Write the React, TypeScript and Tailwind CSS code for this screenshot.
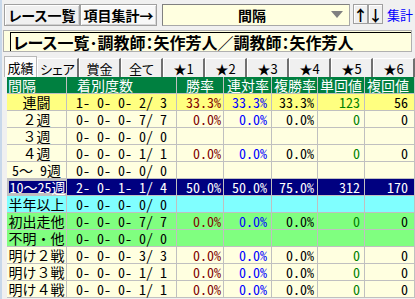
import React from "react";

const ui = "font-['Noto_Sans_CJK_JP',sans-serif] [font-feature-settings:'palt']";
const mono = "font-['Noto_Sans_Mono_CJK_JP','Noto_Sans_CJK_JP',monospace]";

type Row = {
  label: string;
  rec: string;
  w?: string;
  r?: string;
  p?: string;
  t?: string;
  f?: string;
  kind: "normal" | "yellow" | "navy" | "cyan" | "green";
};

const rows: Row[] = [
  { label: "連闘", rec: "1- 0- 0- 2/ 3", w: "33.3%", r: "33.3%", p: "33.3%", t: "123", f: "56", kind: "yellow" },
  { label: "２週", rec: "0- 0- 0- 7/ 7", w: "0.0%", r: "0.0%", p: "0.0%", t: "0", f: "0", kind: "normal" },
  { label: "３週", rec: "0- 0- 0- 0/ 0", kind: "normal" },
  { label: "４週", rec: "0- 0- 0- 1/ 1", w: "0.0%", r: "0.0%", p: "0.0%", t: "0", f: "0", kind: "normal" },
  { label: "5～ 9週", rec: "0- 0- 0- 0/ 0", kind: "normal" },
  { label: "10～25週", rec: "2- 0- 1- 1/ 4", w: "50.0%", r: "50.0%", p: "75.0%", t: "312", f: "170", kind: "navy" },
  { label: "半年以上", rec: "0- 0- 0- 0/ 0", kind: "cyan" },
  { label: "初出走他", rec: "0- 0- 0- 7/ 7", w: "0.0%", r: "0.0%", p: "0.0%", t: "0", f: "0", kind: "green" },
  { label: "不明・他", rec: "0- 0- 0- 0/ 0", kind: "green" },
  { label: "明け２戦", rec: "0- 0- 0- 3/ 3", w: "0.0%", r: "0.0%", p: "0.0%", t: "0", f: "0", kind: "normal" },
  { label: "明け３戦", rec: "0- 0- 0- 1/ 1", w: "0.0%", r: "0.0%", p: "0.0%", t: "0", f: "0", kind: "normal" },
  { label: "明け４戦", rec: "0- 0- 0- 1/ 1", w: "0.0%", r: "0.0%", p: "0.0%", t: "0", f: "0", kind: "normal" },
];

const bgFor: Record<Row["kind"], string> = {
  normal: "bg-[#ffffe0]",
  yellow: "bg-[#ffff80]",
  navy: "bg-[#000080]",
  cyan: "bg-[#80ffff]",
  green: "bg-[#80ff80]",
};

const tabs = ["シェア", "賞金", "全て", "★1", "★2", "★3", "★4", "★5", "★6"];

function DataRow({ row }: { row: Row }) {
  const navy = row.kind === "navy";
  const cell = "h-full border-r border-[#c0c0c0] flex items-center";
  return (
    <div className={`flex h-[17px] border-b border-[#c0c0c0] ${bgFor[row.kind]} ${navy ? "text-white" : "text-black"}`}>
      <div className={`${cell} w-[60px] justify-center ${navy ? "border-2 border-[#a00000]" : ""}`}>
        <span className="whitespace-pre">{row.label}</span>
      </div>
      <div className={`${cell} w-[110px] justify-center whitespace-pre`}>{row.rec}</div>
      <div className={`${cell} w-[47px] justify-end pr-[2px] ${navy ? "" : "text-[#800000]"}`}>{row.w}</div>
      <div className={`${cell} w-[48px] justify-end pr-[4px] ${navy ? "" : "text-[#0000ff]"}`}>{row.r}</div>
      <div className={`${cell} w-[46px] justify-end pr-[3px]`}>{row.p}</div>
      <div className={`${cell} w-[47px] justify-end pr-[4px] ${navy ? "" : "text-[#008000]"}`}>{row.t}</div>
      <div className={`${cell} w-[50px] justify-end pr-[6px]`}>{row.f}</div>
    </div>
  );
}

export default function App() {
  return (
    <div className="w-[415px] h-[299px] overflow-hidden bg-[#f0f0f0] border-l-2 border-[#c8d8ea] flex flex-col">
      {/* top bar */}
      <div className={`flex items-start pt-[4px] pl-[2px] ${ui}`}>
        <div className="w-[76px] h-[22px] border border-[#a0a0a0] bg-[#f0f0f0] shadow-[inset_1px_1px_0_#fff,inset_-1px_-1px_0_#d0d0d0] flex items-center justify-center font-bold text-[14px] leading-none text-black">
          レース一覧
        </div>
        <div className="w-[77px] h-[22px] border border-[#a0a0a0] bg-[#f8f8f8] shadow-[inset_1px_1px_0_#fff,inset_-1px_-1px_0_#d8d8d8] flex items-center justify-center font-bold text-[14px] leading-none text-black">
          項目集計→
        </div>
        <div className="ml-[5px] w-[188px] h-[22px] border border-[#a8a8a8] border-t-[#808080] border-l-[#808080] bg-[#ffffe0] flex items-center">
          <span className="flex-1 text-center font-bold text-[14px] leading-none text-black pl-[10px]">間隔</span>
          <svg width="12" height="8" viewBox="0 0 12 8" className="mr-[6px]">
            <polygon points="0,0 12,0 6,7" fill="#808080" />
          </svg>
        </div>
        <div className="ml-[3px] w-[15px] h-[20px] border border-[#a0a0a0] bg-[#f0f0f0] shadow-[inset_1px_1px_0_#fff] flex items-center justify-center font-bold text-[15px] leading-none text-black">
          ↑
        </div>
        <div className="w-[15px] h-[20px] border border-[#a0a0a0] bg-[#f0f0f0] shadow-[inset_1px_1px_0_#fff] flex items-center justify-center font-bold text-[15px] leading-none text-black">
          ↓
        </div>
        <div className="ml-[4px] h-[20px] flex items-center whitespace-nowrap text-[13px] leading-none text-[#0000ff]">集計</div>
      </div>

      {/* title box */}
      <div className={`mt-[4px] ml-[1px] w-[409px] h-[22px] border border-[#b0b0b0] bg-[#ffffe0] pl-[6px] pt-[1px] ${ui}`}>
        <div className="h-full border-l border-t border-[#000] flex items-center pl-[2px] font-bold text-[16px] leading-none text-black whitespace-nowrap">
          レース一覧･調教師：矢作芳人／調教師：矢作芳人
        </div>
      </div>

      {/* tabs */}
      <div className={`mt-[4px] ml-[2px] flex items-end h-[21px] ${ui}`}>
        <div className="w-[43px] h-[21px] bg-[#fcfcfc] border border-b-0 border-[#b8b8b8] flex items-center justify-center text-[13px] leading-none text-black">
          成績
        </div>
        {tabs.map((t) => (
          <div
            key={t}
            className="w-[42px] h-[19px] shrink-0 bg-[#f0f0f0] border-t border-l border-white border-r-2 border-r-[#707070] flex items-center justify-center text-[13px] leading-none text-black"
          >
            {t}
          </div>
        ))}
      </div>

      {/* table */}
      <div className={`ml-[5px] flex flex-col w-[420px] text-[14px] leading-[16px] ${mono}`}>
        <div className={`flex h-[17px] bg-[#008040] text-white border-b border-[#c0c0c0] ${ui}`}>
          <div className="w-[60px] h-full border-r border-[#c0c0c0] pl-[1px] flex items-center">間隔</div>
          <div className="w-[110px] h-full border-r border-[#c0c0c0] pl-[10px] flex items-center">着別度数</div>
          <div className="w-[47px] h-full border-r border-[#c0c0c0] pl-[9px] flex items-center">勝率</div>
          <div className="w-[48px] h-full border-r border-[#c0c0c0] pl-[3px] flex items-center">連対率</div>
          <div className="w-[46px] h-full border-r border-[#c0c0c0] pl-[2px] flex items-center">複勝率</div>
          <div className="w-[47px] h-full border-r border-[#c0c0c0] pl-[2px] flex items-center">単回値</div>
          <div className="w-[50px] h-full border-r border-[#c0c0c0] pl-[2px] flex items-center">複回値</div>
        </div>
        {rows.map((r) => (
          <DataRow key={r.label} row={r} />
        ))}
      </div>
    </div>
  );
}
